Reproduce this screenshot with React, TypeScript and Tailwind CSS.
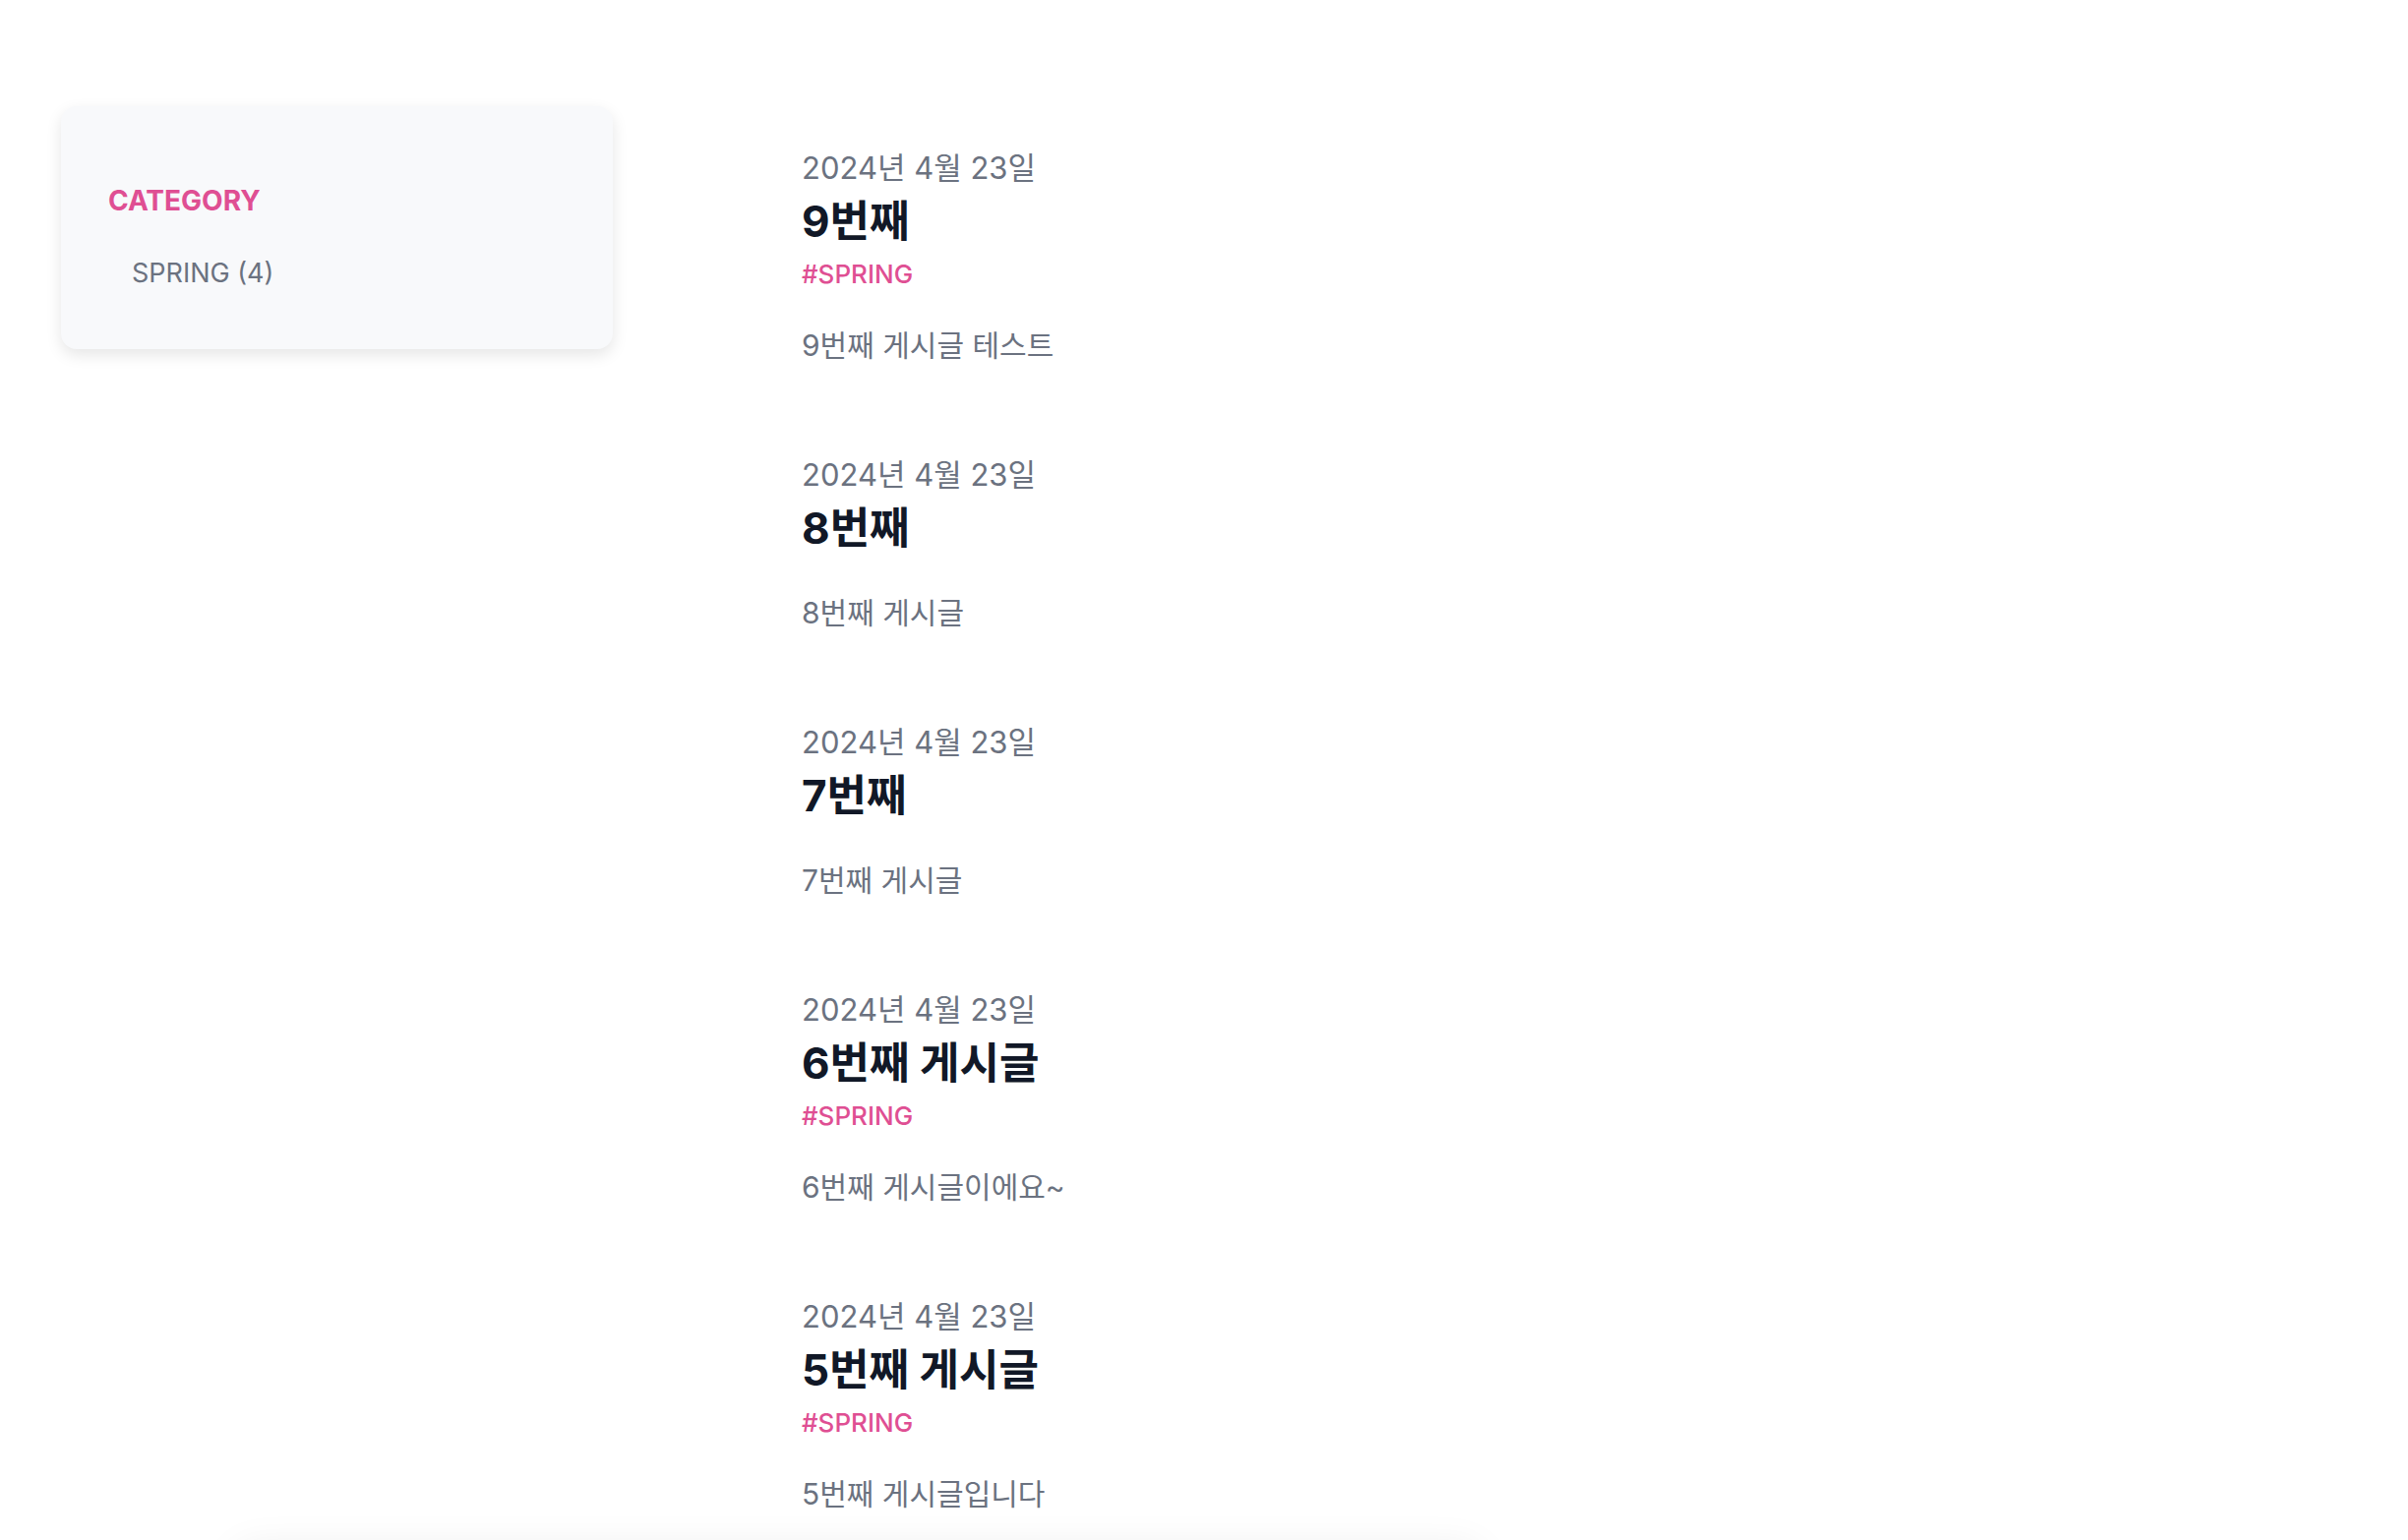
const posts = [
  { date: "2024년 4월 23일", title: "9번째", tag: "SPRING", summary: "9번째 게시글 테스트" },
  { date: "2024년 4월 23일", title: "8번째", tag: null, summary: "8번째 게시글" },
  { date: "2024년 4월 23일", title: "7번째", tag: null, summary: "7번째 게시글" },
  { date: "2024년 4월 23일", title: "6번째 게시글", tag: "SPRING", summary: "6번째 게시글이에요~" },
  { date: "2024년 4월 23일", title: "5번째 게시글", tag: "SPRING", summary: "5번째 게시글입니다" },
];

function CategoryCard() {
  return (
    <aside className="w-[561px] shrink-0 rounded-2xl bg-[#f8f9fb] pl-[48px] pr-8 pt-[76px] pb-[57px] shadow-[0_6px_16px_rgba(0,0,0,0.10)]">
      <h2 className="text-[28px] font-bold leading-[40px] text-[#df4f93]">CATEGORY</h2>
      <ul className="mt-[34px] pl-[24px]">
        <li className="text-[27px] leading-[40px] text-[#6b7280]">SPRING (4)</li>
      </ul>
    </aside>
  );
}

function PostItem({ post }: { post: (typeof posts)[number] }) {
  return (
    <article className="flex flex-col">
      <time className="text-[31px] leading-[40px] text-[#6b7280]">{post.date}</time>
      <h3 className="text-[44px] font-bold leading-[68px] text-[#111827]">{post.title}</h3>
      {post.tag && (
        <span className="text-[26px] font-medium leading-[40px] text-[#df4f93]">#{post.tag}</span>
      )}
      <p className="mt-[32px] text-[30px] leading-[40px] text-[#6b7280]">{post.summary}</p>
    </article>
  );
}

export default function App() {
  return (
    <div
      className="h-screen overflow-hidden bg-white"
      style={{ fontFamily: 'Inter, "Noto Sans CJK KR", sans-serif' }}
    >
      <div className="flex items-start pl-[62px] pt-[108px]">
        <CategoryCard />
        <main className="ml-[192px] flex flex-col gap-[92px] pt-[43px]">
          {posts.map((p, i) => (
            <PostItem key={i} post={p} />
          ))}
        </main>
      </div>
      <div className="ml-[240px] mt-[36px] h-[200px] w-[1265px] rounded-2xl bg-white shadow-[0_0_40px_rgba(0,0,0,0.08)]" />
    </div>
  );
}
